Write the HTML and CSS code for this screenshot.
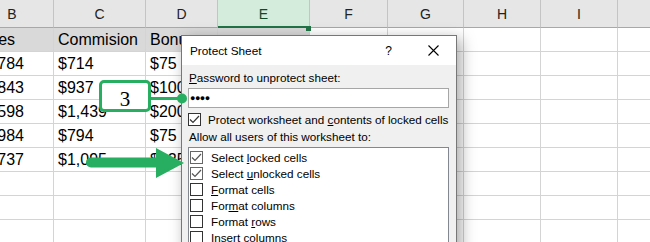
FILE: index.html
```html
<!DOCTYPE html>
<html>
<head>
<meta charset="utf-8">
<link rel="stylesheet" href="styles.css">
</head>
<body>
<div class="sheet">
  <div class="ch">B</div><div class="ch">C</div><div class="ch">D</div><div class="ch ch-sel">E</div><div class="ch">F</div><div class="ch">G</div><div class="ch">H</div><div class="ch">I</div><div class="ch"></div>

  <div class="c hd">Sales</div><div class="c hd">Commision</div><div class="c hd">Bonus</div><div class="c hd"></div><div class="c"></div><div class="c"></div><div class="c"></div><div class="c"></div><div class="c"></div>

  <div class="c">$1,784</div><div class="c">$714</div><div class="c">$75</div><div class="c"></div><div class="c"></div><div class="c"></div><div class="c"></div><div class="c"></div><div class="c"></div>
  <div class="c">$1,843</div><div class="c">$937</div><div class="c">$100</div><div class="c"></div><div class="c"></div><div class="c"></div><div class="c"></div><div class="c"></div><div class="c"></div>
  <div class="c">$1,598</div><div class="c">$1,439</div><div class="c">$200</div><div class="c"></div><div class="c"></div><div class="c"></div><div class="c"></div><div class="c"></div><div class="c"></div>
  <div class="c">$1,984</div><div class="c">$794</div><div class="c">$75</div><div class="c"></div><div class="c"></div><div class="c"></div><div class="c"></div><div class="c"></div><div class="c"></div>
  <div class="c">$1,737</div><div class="c">$1,095</div><div class="c">$125</div><div class="c"></div><div class="c"></div><div class="c"></div><div class="c"></div><div class="c"></div><div class="c"></div>
  <div class="c"></div><div class="c"></div><div class="c"></div><div class="c"></div><div class="c"></div><div class="c"></div><div class="c"></div><div class="c"></div><div class="c"></div>
  <div class="c"></div><div class="c"></div><div class="c"></div><div class="c"></div><div class="c"></div><div class="c"></div><div class="c"></div><div class="c"></div><div class="c"></div>
  <div class="c"></div><div class="c"></div><div class="c"></div><div class="c"></div><div class="c"></div><div class="c"></div><div class="c"></div><div class="c"></div><div class="c"></div>
</div>

<div class="sel-handle"></div>

<div class="dialog">
  <div class="titlebar">
    <span class="title">Protect Sheet</span>
    <span class="help">?</span>
    <svg class="close" width="11" height="11" viewBox="0 0 11 11"><path d="M0.5 0.5 L10.5 10.5 M10.5 0.5 L0.5 10.5" stroke="#000" stroke-width="1.1" fill="none"/></svg>
  </div>
  <div class="body">
    <div class="label"><u>P</u>assword to unprotect sheet:</div>
    <div class="input"><span class="dots">●●●●</span></div>
    <div class="check"><span class="box"><svg width="11" height="11" viewBox="0 0 11 11"><path d="M1 5.5 L4 8.5 L10 2" stroke="#333" stroke-width="1.2" fill="none"/></svg></span><span>Protect worksheet and <u>c</u>ontents of locked cells</span></div>
    <div class="label">Allow all users of this worksheet to:</div>
    <div class="list">
      <div class="item"><span class="box light"><svg width="11" height="11" viewBox="0 0 11 11"><path d="M1 5.5 L4 8.5 L10 2" stroke="#555" stroke-width="1.2" fill="none"/></svg></span><span>Select <u>l</u>ocked cells</span></div>
      <div class="item"><span class="box light"><svg width="11" height="11" viewBox="0 0 11 11"><path d="M1 5.5 L4 8.5 L10 2" stroke="#555" stroke-width="1.2" fill="none"/></svg></span><span>Select <u>u</u>nlocked cells</span></div>
      <div class="item"><span class="box"></span><span><u>F</u>ormat cells</span></div>
      <div class="item"><span class="box"></span><span>For<u>m</u>at columns</span></div>
      <div class="item"><span class="box"></span><span>Format <u>r</u>ows</span></div>
      <div class="item"><span class="box"></span><span><u>I</u>nsert columns</span></div>
    </div>
  </div>
</div>

<div class="callout">3</div>
<svg class="annot" width="650" height="242" viewBox="0 0 650 242">
  <line x1="150" y1="98.5" x2="180" y2="98.5" stroke="#27ae60" stroke-width="3"/>
  <circle cx="182" cy="98.5" r="5" fill="#27ae60"/>
  <path d="M91 157.5 L156 157.5 L156 148 L184 163 L156 178 L156 167.5 L91 167.5 A5 5 0 0 1 91 157.5 Z" fill="#27ae60"/>
</svg>
</body>
</html>
```
FILE: styles.css
```css
html, body {
  margin: 0;
  padding: 0;
  width: 650px;
  height: 242px;
  overflow: hidden;
  background: #fff;
  position: relative;
}

.sheet {
  display: grid;
  grid-template-columns: 83px 92px 72px 92px 78px 76px 77px 77px 60px;
  grid-template-rows: 28px repeat(9, 24px);
  margin-left: -29px;
  font-family: "Liberation Sans", Arial, sans-serif;
  font-size: 16px;
  color: #000;
}

.ch {
  box-sizing: border-box;
  background: #e6e6e6;
  border-right: 1px solid #c4c4c4;
  border-bottom: 1px solid #a8a8a8;
  display: flex;
  align-items: center;
  justify-content: center;
  font-size: 14px;
  color: #222;
  padding-top: 1px;
}

.ch-sel {
  background: #d3ecdc;
  color: #0d4a28;
  border-bottom: 2px solid #217346;
}

.c {
  box-sizing: border-box;
  border-right: 1px solid #d4d4d4;
  border-bottom: 1px solid #d4d4d4;
  padding-left: 4px;
  display: flex;
  align-items: center;
  white-space: nowrap;
  overflow: hidden;
}

.hd {
  background: #d9d9d9;
}

.sel-handle {
  position: absolute;
  left: 306px;
  top: 26px;
  width: 5px;
  height: 5px;
  background: #217346;
}

.dialog {
  position: absolute;
  left: 181px;
  top: 35px;
  width: 276px;
  height: 240px;
  box-sizing: border-box;
  border: 1px solid #777;
  background: #f0f0f0;
  box-shadow: 4px 4px 14px rgba(0, 0, 0, 0.35);
  font-family: "Liberation Sans", Arial, sans-serif;
  font-size: 11.7px;
  color: #000;
  display: flex;
  flex-direction: column;
}

.titlebar {
  height: 29px;
  background: #fff;
  display: flex;
  align-items: center;
  padding-left: 8px;
  padding-right: 17px;
}

.title {
  flex: 1;
  font-size: 11.8px;
}

.help {
  margin-right: 36px;
  font-size: 12px;
}

.close {
  display: block;
}

.body {
  padding: 5px 7px 0 6px;
  display: flex;
  flex-direction: column;
}

.label {
  height: 16px;
  line-height: 16px;
  padding-left: 1px;
}

.input {
  margin-top: 2px;
  height: 20px;
  box-sizing: border-box;
  border: 1px solid #a6a6a6;
  background: #fff;
  display: flex;
  align-items: center;
  padding-left: 1px;
}

.dots {
  font-size: 9px;
  letter-spacing: -0.5px;
}

.check {
  margin-top: 3px;
  height: 16px;
  display: flex;
  align-items: center;
  gap: 7px;
  margin-bottom: 2px;
}

.box {
  width: 13px;
  height: 13px;
  box-sizing: border-box;
  border: 1px solid #333;
  background: #fff;
  display: flex;
  align-items: center;
  justify-content: center;
  flex: none;
}

.box.light {
  border-color: #666;
}

.list {
  margin-top: 2px;
  height: 120px;
  box-sizing: border-box;
  border: 1px solid #828790;
  background: #fff;
  padding-top: 1px;
  padding-left: 1px;
}

.item {
  height: 16px;
  display: flex;
  align-items: center;
  gap: 8px;
}

.callout {
  position: absolute;
  left: 99px;
  top: 80px;
  width: 52px;
  height: 32px;
  box-sizing: border-box;
  border: 3.5px solid #27ae60;
  border-radius: 5px;
  background: #fff;
  display: flex;
  align-items: center;
  justify-content: center;
  padding-top: 6px;
  font-family: "Liberation Serif", "Times New Roman", serif;
  font-size: 21px;
  color: #000;
}

.annot {
  position: absolute;
  left: 0;
  top: 0;
  pointer-events: none;
}
```
